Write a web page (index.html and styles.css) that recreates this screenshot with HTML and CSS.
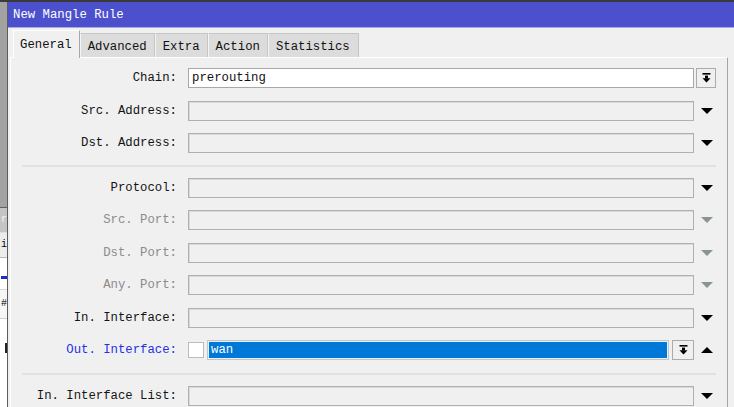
FILE: index.html
```html
<!DOCTYPE html>
<html>
<head>
<meta charset="utf-8">
<link rel="stylesheet" href="styles.css">
</head>
<body>
<div class="screen">
  <div class="strip">
    <div class="strip-top"></div>
    <div class="frag frag-hdr"><span>r</span></div>
    <div class="frag frag-a"><span>i</span></div>
    <div class="frag frag-b"><span class="plus"></span></div>
    <div class="frag frag-c"><span>#</span></div>
    <div class="frag frag-d"><span class="tick"></span></div>
  </div>
  <div class="dialog">
    <div class="title">New Mangle Rule</div>
    <div class="tabs">
      <div class="tab active">General</div>
      <div class="tab">Advanced</div>
      <div class="tab">Extra</div>
      <div class="tab">Action</div>
      <div class="tab">Statistics</div>
    </div>
    <div class="panel">
      <div class="row">
        <div class="label">Chain:</div>
        <div class="field input-white">prerouting</div>
        <div class="trail"><div class="btn"><svg width="9" height="10" viewBox="0 0 9 10"><rect x="0.5" y="0" width="8" height="1.6" fill="#000"/><rect x="3" y="2.6" width="3" height="3" fill="#000"/><path d="M0.5 5.2 L8.5 5.2 L4.5 9.5 Z" fill="#000"/></svg></div></div>
      </div>
      <div class="row">
        <div class="label">Src. Address:</div>
        <div class="field"></div>
        <div class="trail"><span class="down"></span></div>
      </div>
      <div class="row">
        <div class="label">Dst. Address:</div>
        <div class="field"></div>
        <div class="trail"><span class="down"></span></div>
      </div>
      <div class="sep sep1"></div>
      <div class="row">
        <div class="label">Protocol:</div>
        <div class="field"></div>
        <div class="trail"><span class="down"></span></div>
      </div>
      <div class="row">
        <div class="label dis">Src. Port:</div>
        <div class="field"></div>
        <div class="trail"><span class="down dis"></span></div>
      </div>
      <div class="row">
        <div class="label dis">Dst. Port:</div>
        <div class="field"></div>
        <div class="trail"><span class="down dis"></span></div>
      </div>
      <div class="row">
        <div class="label dis">Any. Port:</div>
        <div class="field"></div>
        <div class="trail"><span class="down dis"></span></div>
      </div>
      <div class="row">
        <div class="label">In. Interface:</div>
        <div class="field"></div>
        <div class="trail"><span class="down"></span></div>
      </div>
      <div class="row">
        <div class="label blue">Out. Interface:</div>
        <div class="combo">
          <div class="check"></div>
          <div class="sel">wan</div>
          <div class="btn wide"><svg width="9" height="10" viewBox="0 0 9 10"><rect x="0.5" y="0" width="8" height="1.6" fill="#000"/><rect x="3" y="2.6" width="3" height="3" fill="#000"/><path d="M0.5 5.2 L8.5 5.2 L4.5 9.5 Z" fill="#000"/></svg></div>
        </div>
        <div class="trail"><span class="up"></span></div>
      </div>
      <div class="sep sep2"></div>
      <div class="row">
        <div class="label">In. Interface List:</div>
        <div class="field"></div>
        <div class="trail"><span class="down"></span></div>
      </div>
    </div>
  </div>
</div>
</body>
</html>
```

FILE: styles.css
```css
* { box-sizing: border-box; }
html, body { margin: 0; padding: 0; }
body {
  width: 734px;
  height: 407px;
  overflow: hidden;
  background: #f0f0f0;
  font-family: "Liberation Mono", "DejaVu Sans Mono", monospace;
  font-size: 12.3px;
  color: #111;
}
.screen {
  display: flex;
  height: 407px;
  border-top: 2px solid #3a3a3a;
}
.strip {
  width: 8px;
  flex: none;
  display: flex;
  flex-direction: column;
  border-right: 1px solid #5c5c5c;
  overflow: hidden;
}
.strip-top { height: 205px; background: #a2a2a2; flex: none; }
.frag {
  flex: none;
  display: flex;
  justify-content: flex-end;
  align-items: center;
  overflow: hidden;
  white-space: nowrap;
  font-size: 10px;
  line-height: 12px;
}
.frag-hdr { height: 25px; background: #c4c4c4; color: #f4f4f4; border-top: 1px solid #606060; }
.frag-a { height: 26px; background: #ececec; color: #000; border-top: 1px solid #e0e0e0; border-bottom: 1px solid #b8b8b8; }
.frag-b { height: 32px; background: #fff; border-bottom: 1px solid #d8d8d8; }
.frag-c { height: 29px; background: #f6f6f6; color: #000; border-bottom: 1px solid #d0d0d0; }
.frag-d { flex: 1; background: #fff; align-items: flex-start; }
.plus { display: block; width: 6px; height: 3px; background: #1a2ad8; margin-top: 8px; }
.tick { display: block; width: 2px; height: 10px; background: #222; margin-top: 24px; }

.dialog {
  flex: 1;
  display: flex;
  flex-direction: column;
  min-width: 0;
}
.title {
  height: 26px;
  flex: none;
  background: #4c50cd;
  border-bottom: 1px solid #a8aae6;
  color: #fff;
  padding-left: 5px;
  display: flex;
  align-items: center;
  padding-top: 1px;
}
.tabs {
  display: flex;
  align-items: flex-end;
  margin-top: 2px;
  margin-left: 5px;
  height: 28px;
  margin-bottom: -1px;
  position: relative;
  z-index: 1;
}
.tab {
  height: 24px;
  padding: 2px 7px 0 7px;
  background: #dcdcdc;
  border: 1px solid #c6c6c6;
  border-bottom: none;
  border-left: 1px solid #f4f4f4;
  display: flex;
  align-items: center;
  white-space: nowrap;
  margin-bottom: 1px;
}
.tab.active {
  height: 28px;
  background: #f0f0f0;
  border-left: 1px solid #fff;
  border-top: 1px solid #fff;
  border-right: 1px solid #a8a8a8;
  margin-bottom: 0;
  padding: 0 7px 0 6px;
}
.tab:last-child { padding-right: 8px; }
.panel {
  margin-left: 2px;
  margin-right: 6px;
  flex: 1;
  border-top: 1px solid #fff;
  border-left: 1px solid #fff;
  border-right: 1px solid #a6a6a6;
  padding-top: 4px;
}
.row {
  height: 32.5px;
  display: flex;
  align-items: center;
}
.label {
  width: 166px;
  flex: none;
  text-align: right;
  white-space: nowrap;
  margin-right: 11px;
  color: #141414;
}
.label.dis { color: #8c8c8c; }
.label.blue { color: #2430e6; }
.field {
  width: 506px;
  height: 20px;
  flex: none;
  border: 1px solid #b0b0b0;
  box-shadow: inset 1px 1px 0 #dadada;
  background: #f0f0f0;
  padding-left: 3px;
  display: flex;
  align-items: center;
}
.field.input-white { background: #fff; box-shadow: none; border-color: #a8a8a8; }
.trail {
  width: 22px;
  margin-left: 2px;
  flex: none;
  display: flex;
  justify-content: center;
  align-items: center;
  height: 20px;
}
.trail .btn { margin-right: 2px; }
.btn {
  width: 20px;
  height: 20px;
  border: 1px solid #ababab;
  background: #f0f0f0;
  display: flex;
  align-items: center;
  justify-content: center;
}
.btn.wide { width: 22px; }
.down {
  width: 0; height: 0;
  border-left: 6px solid transparent;
  border-right: 6px solid transparent;
  border-top: 6px solid #000;
}
.down.dis { border-top-color: #8b958b; }
.up {
  width: 0; height: 0;
  border-left: 6px solid transparent;
  border-right: 6px solid transparent;
  border-bottom: 6px solid #000;
}
.combo {
  width: 506px;
  flex: none;
  display: flex;
  align-items: center;
  gap: 3px;
}
.check {
  width: 16px;
  height: 16px;
  background: #fff;
  border: 1px solid #bcbcbc;
}
.sel {
  width: 462px;
  height: 20px;
  border: 1px solid #c4c4c4;
  background: #0078d7;
  box-shadow: inset 0 0 0 1px #e8f0f8;
  color: #fff;
  padding-left: 3px;
  display: flex;
  align-items: center;
}
.sep {
  margin-left: 11px;
  width: 694px;
  border-bottom: 2px solid #e2e2e2;
}
.sep1 { height: 7px; margin-bottom: 5px; }
.sep2 { height: 8px; margin-bottom: 5px; }
```
